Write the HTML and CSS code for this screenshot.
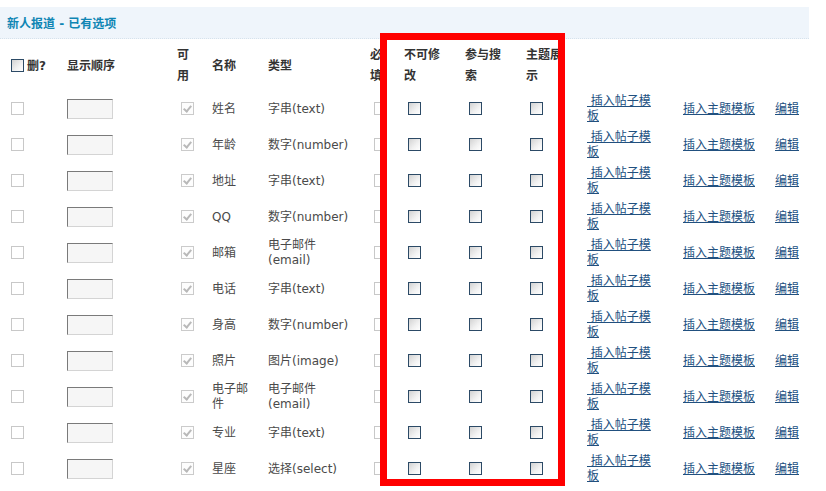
FILE: index.html
```html
<!DOCTYPE html>
<html lang="zh">
<head>
<meta charset="utf-8">
<title>新人报道 - 已有选项</title>
<link rel="stylesheet" href="styles.css">
</head>
<body>
<div class="page">
  <div class="titlebar"><h3 class="title">新人报道 - 已有选项</h3></div>
  <table class="opts">
    <colgroup>
      <col class="w-del"><col class="w-order"><col class="w-avail"><col class="w-name"><col class="w-type"><col class="w-req"><col class="w-flag"><col class="w-flag"><col class="w-flag"><col class="w-tpl1"><col class="w-tpl2"><col class="w-edit">
    </colgroup>
    <thead>
      <tr>
        <th><span class="cb cb-on"></span>删?</th>
        <th>显示顺序</th>
        <th>可用</th>
        <th>名称</th>
        <th>类型</th>
        <th>必填</th>
        <th>不可修改</th>
        <th>参与搜索</th>
        <th>主题展示</th>
        <th></th>
        <th></th>
        <th></th>
      </tr>
    </thead>
    <tbody>
      <tr><td><span class="cb cb-dis"></span></td><td><span class="ord"></span></td><td><span class="cb cb-chk"></span></td><td>姓名</td><td>字串(text)</td><td><span class="cb cb-dis"></span></td><td><span class="cb cb-on"></span></td><td><span class="cb cb-on"></span></td><td><span class="cb cb-on"></span></td><td class="tpl"><a href="#">&nbsp;插入帖子模板</a></td><td><a href="#">插入主题模板</a></td><td><a href="#">编辑</a></td></tr>
      <tr><td><span class="cb cb-dis"></span></td><td><span class="ord"></span></td><td><span class="cb cb-chk"></span></td><td>年龄</td><td>数字(number)</td><td><span class="cb cb-dis"></span></td><td><span class="cb cb-on"></span></td><td><span class="cb cb-on"></span></td><td><span class="cb cb-on"></span></td><td class="tpl"><a href="#">&nbsp;插入帖子模板</a></td><td><a href="#">插入主题模板</a></td><td><a href="#">编辑</a></td></tr>
      <tr><td><span class="cb cb-dis"></span></td><td><span class="ord"></span></td><td><span class="cb cb-chk"></span></td><td>地址</td><td>字串(text)</td><td><span class="cb cb-dis"></span></td><td><span class="cb cb-on"></span></td><td><span class="cb cb-on"></span></td><td><span class="cb cb-on"></span></td><td class="tpl"><a href="#">&nbsp;插入帖子模板</a></td><td><a href="#">插入主题模板</a></td><td><a href="#">编辑</a></td></tr>
      <tr><td><span class="cb cb-dis"></span></td><td><span class="ord"></span></td><td><span class="cb cb-chk"></span></td><td>QQ</td><td>数字(number)</td><td><span class="cb cb-dis"></span></td><td><span class="cb cb-on"></span></td><td><span class="cb cb-on"></span></td><td><span class="cb cb-on"></span></td><td class="tpl"><a href="#">&nbsp;插入帖子模板</a></td><td><a href="#">插入主题模板</a></td><td><a href="#">编辑</a></td></tr>
      <tr><td><span class="cb cb-dis"></span></td><td><span class="ord"></span></td><td><span class="cb cb-chk"></span></td><td>邮箱</td><td>电子邮件(email)</td><td><span class="cb cb-dis"></span></td><td><span class="cb cb-on"></span></td><td><span class="cb cb-on"></span></td><td><span class="cb cb-on"></span></td><td class="tpl"><a href="#">&nbsp;插入帖子模板</a></td><td><a href="#">插入主题模板</a></td><td><a href="#">编辑</a></td></tr>
      <tr><td><span class="cb cb-dis"></span></td><td><span class="ord"></span></td><td><span class="cb cb-chk"></span></td><td>电话</td><td>字串(text)</td><td><span class="cb cb-dis"></span></td><td><span class="cb cb-on"></span></td><td><span class="cb cb-on"></span></td><td><span class="cb cb-on"></span></td><td class="tpl"><a href="#">&nbsp;插入帖子模板</a></td><td><a href="#">插入主题模板</a></td><td><a href="#">编辑</a></td></tr>
      <tr><td><span class="cb cb-dis"></span></td><td><span class="ord"></span></td><td><span class="cb cb-chk"></span></td><td>身高</td><td>数字(number)</td><td><span class="cb cb-dis"></span></td><td><span class="cb cb-on"></span></td><td><span class="cb cb-on"></span></td><td><span class="cb cb-on"></span></td><td class="tpl"><a href="#">&nbsp;插入帖子模板</a></td><td><a href="#">插入主题模板</a></td><td><a href="#">编辑</a></td></tr>
      <tr><td><span class="cb cb-dis"></span></td><td><span class="ord"></span></td><td><span class="cb cb-chk"></span></td><td>照片</td><td>图片(image)</td><td><span class="cb cb-dis"></span></td><td><span class="cb cb-on"></span></td><td><span class="cb cb-on"></span></td><td><span class="cb cb-on"></span></td><td class="tpl"><a href="#">&nbsp;插入帖子模板</a></td><td><a href="#">插入主题模板</a></td><td><a href="#">编辑</a></td></tr>
      <tr><td><span class="cb cb-dis"></span></td><td><span class="ord"></span></td><td><span class="cb cb-chk"></span></td><td>电子邮件</td><td>电子邮件(email)</td><td><span class="cb cb-dis"></span></td><td><span class="cb cb-on"></span></td><td><span class="cb cb-on"></span></td><td><span class="cb cb-on"></span></td><td class="tpl"><a href="#">&nbsp;插入帖子模板</a></td><td><a href="#">插入主题模板</a></td><td><a href="#">编辑</a></td></tr>
      <tr><td><span class="cb cb-dis"></span></td><td><span class="ord"></span></td><td><span class="cb cb-chk"></span></td><td>专业</td><td>字串(text)</td><td><span class="cb cb-dis"></span></td><td><span class="cb cb-on"></span></td><td><span class="cb cb-on"></span></td><td><span class="cb cb-on"></span></td><td class="tpl"><a href="#">&nbsp;插入帖子模板</a></td><td><a href="#">插入主题模板</a></td><td><a href="#">编辑</a></td></tr>
      <tr><td><span class="cb cb-dis"></span></td><td><span class="ord"></span></td><td><span class="cb cb-chk"></span></td><td>星座</td><td>选择(select)</td><td><span class="cb cb-dis"></span></td><td><span class="cb cb-on"></span></td><td><span class="cb cb-on"></span></td><td><span class="cb cb-on"></span></td><td class="tpl"><a href="#">&nbsp;插入帖子模板</a></td><td><a href="#">插入主题模板</a></td><td><a href="#">编辑</a></td></tr>
    </tbody>
  </table>
  <div class="highlight"></div>
</div>
</body>
</html>
```
FILE: styles.css
```css
html, body {
  margin: 0;
  padding: 0;
  background: #fff;
}
body {
  font-family: "DejaVu Sans", "Noto Sans CJK SC", sans-serif;
  font-size: 12px;
  color: #4a4a4a;
}
.page {
  position: relative;
  width: 826px;
  height: 491px;
  padding-top: 7px;
  box-sizing: border-box;
  overflow: hidden;
}
.titlebar {
  width: 809px;
  height: 31px;
  background: #eff5fb;
  border-bottom: 1px dotted #d6e2ec;
  display: flex;
  align-items: center;
}
.title {
  margin: 0 0 0 7px;
  font-size: 12px;
  font-weight: bold;
  color: #0f86b4;
}
.opts {
  border-collapse: collapse;
  table-layout: fixed;
  width: 809px;
}
.w-del { width: 60px; }
.w-order { width: 110px; }
.w-avail { width: 35px; }
.w-name { width: 56px; }
.w-type { width: 102px; }
.w-req { width: 34px; }
.w-flag { width: 61px; }
.w-tpl1 { width: 96px; }
.w-tpl2 { width: 92px; }
.w-edit { width: 41px; }
.opts th, .opts td {
  padding: 0 7px;
  text-align: left;
  vertical-align: middle;
  overflow: hidden;
}
.opts th {
  height: 50px;
  padding-top: 2px;
  line-height: 21px;
  font-weight: bold;
  color: #333;
  white-space: normal;
}
.opts td {
  height: 36px;
  line-height: 15px;
}
.opts td.tpl {
  padding-right: 20px;
}
.opts a {
  color: #21507f;
  text-decoration: underline;
}
.cb {
  display: inline-block;
  position: relative;
  width: 13px;
  height: 13px;
  box-sizing: border-box;
  margin: 0 3px 0 4px;
  vertical-align: middle;
  top: -1px;
}
.cb-dis {
  border: 1px solid #c8c8c8;
  background: #fff;
}
.cb-chk {
  border: 1px solid #cbcbcb;
  background: #fdfdfd;
}
.cb-chk::after {
  content: "";
  position: absolute;
  left: 3px;
  top: 1px;
  width: 3px;
  height: 6px;
  border-right: 2px solid #b9b9b9;
  border-bottom: 2px solid #b9b9b9;
  transform: rotate(40deg);
}
.cb-on {
  border: 1px solid #2c4a66;
  background: linear-gradient(135deg, #d2d2d2 0%, #f2f2f2 60%, #ffffff 100%);
}
.ord {
  display: inline-block;
  width: 46px;
  height: 20px;
  box-sizing: border-box;
  border-top: 1px solid #7a7a7a;
  border-left: 1px solid #7a7a7a;
  border-right: 1px solid #d4d4d4;
  border-bottom: 1px solid #d4d4d4;
  background: #f6f6f6;
  vertical-align: middle;
}
.highlight {
  position: absolute;
  left: 380px;
  top: 33px;
  width: 185px;
  height: 453px;
  box-sizing: border-box;
  border: 7px solid #ff0000;
  pointer-events: none;
}
```
